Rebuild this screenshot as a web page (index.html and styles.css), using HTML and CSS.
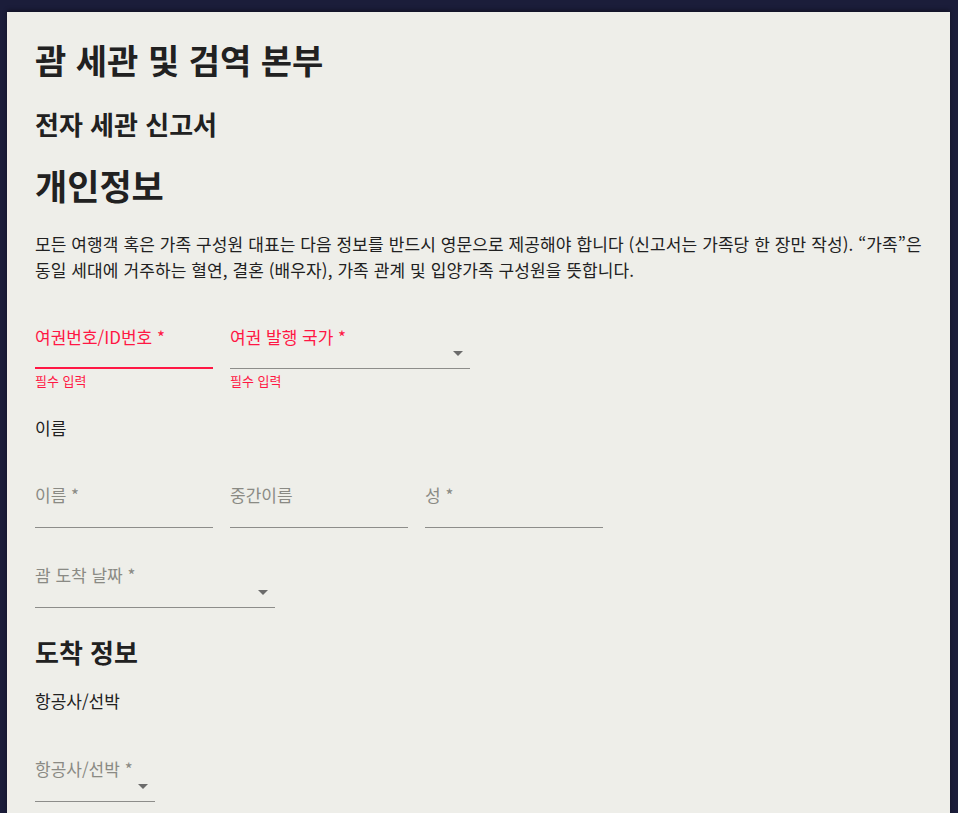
FILE: index.html
```html
<!DOCTYPE html>
<html lang="ko">
<head>
  <meta charset="UTF-8" />
  <title>괌 세관 및 검역 본부 - 전자 세관 신고서</title>
  <link rel="stylesheet" href="styles.css">
</head>
<body>
  <main class="card">
    <h1 class="title">괌 세관 및 검역 본부</h1>
    <h2 class="subtitle">전자 세관 신고서</h2>

    <h3 class="section">개인정보</h3>
    <p class="intro">모든 여행객 혹은 가족 구성원 대표는 다음 정보를 반드시 영문으로 제공해야 합니다 (신고서는 가족당 한 장만 작성). “가족”은 동일 세대에 거주하는 혈연, 결혼 (배우자), 가족 관계 및 입양가족 구성원을 뜻합니다.</p>

    <div class="row row-passport">
      <div class="field w178 error">
        <label class="field-label">여권번호/ID번호 *</label>
        <div class="field-input focused"></div>
        <div class="helper">필수 입력</div>
      </div>
      <div class="field w240 error">
        <label class="field-label">여권 발행 국가 *</label>
        <div class="field-input select"><span class="arrow"></span></div>
        <div class="helper">필수 입력</div>
      </div>
    </div>

    <div class="group-label name-label">이름</div>
    <div class="row row-name">
      <div class="field w178">
        <label class="field-label">이름 *</label>
        <div class="field-input"></div>
      </div>
      <div class="field w178">
        <label class="field-label">중간이름</label>
        <div class="field-input"></div>
      </div>
      <div class="field w178">
        <label class="field-label">성 *</label>
        <div class="field-input"></div>
      </div>
    </div>

    <div class="row row-date">
      <div class="field w240">
        <label class="field-label">괌 도착 날짜 *</label>
        <div class="field-input select"><span class="arrow"></span></div>
      </div>
    </div>

    <h2 class="subtitle arrival">도착 정보</h2>
    <div class="group-label carrier-label">항공사/선박</div>
    <div class="row row-carrier">
      <div class="field w120">
        <label class="field-label">항공사/선박 *</label>
        <div class="field-input select"><span class="arrow"></span></div>
      </div>
    </div>
  </main>
</body>
</html>
```
FILE: styles.css
```css
body {
  margin: 0;
  background-color: #1b1d3a;
  font-family: "Noto Sans CJK KR", "Noto Sans", sans-serif;
  color: #212121;
  height: 813px;
  overflow: hidden;
}
.card {
  margin: 12px 8px 0 7px;
  padding: 28px 20px 40px 28px;
  background-color: #eeeee9;
  box-shadow: 0 -2px 4px rgba(0, 0, 0, 0.35);
  min-height: 900px;
}
.title {
  margin: 0;
  font-size: 34px;
  line-height: 40px;
  font-weight: 700;
}
.subtitle {
  margin: 28px 0 0;
  font-size: 26px;
  line-height: 32px;
  font-weight: 700;
}
.section {
  margin: 25px 0 0;
  font-size: 35px;
  line-height: 40px;
  font-weight: 700;
}
.intro {
  margin: 26px 0 0;
  font-size: 17px;
  line-height: 26px;
  letter-spacing: 0.1px;
}
.row {
  display: flex;
  gap: 17px;
}
.row-passport {
  margin-top: 44px;
}
.row-name {
  margin-top: 47px;
}
.row-date {
  margin-top: 37px;
}
.row-carrier {
  margin-top: 48px;
}
.group-label {
  font-size: 17px;
  line-height: 20px;
}
.name-label {
  margin-top: 29px;
}
.carrier-label {
  margin-top: 23px;
}
.subtitle.arrival {
  margin-top: 28px;
}
.field {
  display: flex;
  flex-direction: column;
}
.w178 {
  width: 178px;
}
.w240 {
  width: 240px;
}
.w120 {
  width: 120px;
}
.field-label {
  font-size: 17px;
  line-height: 20px;
  color: #8a8a84;
  white-space: nowrap;
}
.field-input {
  position: relative;
  height: 22px;
  border-bottom: 1px solid #8d8d8a;
}
.row-passport .field-input {
  height: 21px;
}
.field-input.focused {
  height: 20px;
  border-bottom: 2px solid #ff1744;
}
.arrow {
  position: absolute;
  right: 7px;
  top: 5px;
  width: 0;
  height: 0;
  border-left: 5px solid transparent;
  border-right: 5px solid transparent;
  border-top: 5px solid #6b6b6b;
}
.row-passport .arrow {
  top: 4px;
}
.error .field-label,
.helper {
  color: #ff1744;
}
.helper {
  margin-top: 4px;
  font-size: 13px;
  line-height: 16px;
}
```
